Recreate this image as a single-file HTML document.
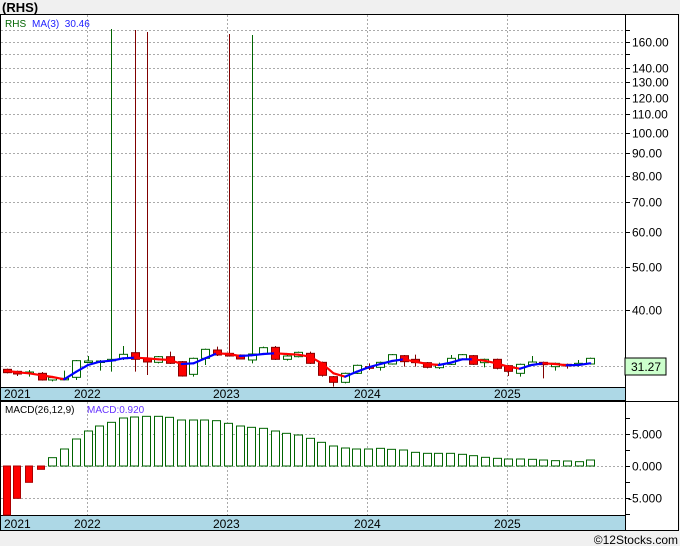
<!DOCTYPE html>
<html><head><meta charset="utf-8"><style>
body{margin:0;width:680px;height:546px;background:#f0f0f0;overflow:hidden;font-family:"Liberation Sans",sans-serif;position:relative}
svg{position:absolute;left:0;top:0}
</style></head><body>
<svg id="s" width="680" height="546" xmlns="http://www.w3.org/2000/svg" font-family="Liberation Sans, sans-serif">
<rect x="0" y="0" width="680" height="14" fill="#f0f0f0"/>
<text x="2" y="12" font-size="13" font-weight="bold" fill="#000">(RHS)</text>
<rect x="0.5" y="14.5" width="678" height="516" fill="#fff" stroke="#000"/>
<g id="grid" stroke="#aaa" stroke-dasharray="2,2" stroke-width="1"></g>
<rect x="1" y="387" width="624" height="13" fill="#add8e6"/>
<line x1="0" y1="387.5" x2="625" y2="387.5" stroke="#000"/>
<line x1="0" y1="400.5" x2="625" y2="400.5" stroke="#000"/>
<line x1="0" y1="401.5" x2="679" y2="401.5" stroke="#000"/>
<rect x="1" y="516" width="624" height="14" fill="#add8e6"/>
<line x1="0" y1="515.5" x2="625" y2="515.5" stroke="#000"/>
<line x1="625.5" y1="14" x2="625.5" y2="531" stroke="#000"/>
<g id="c"></g>
<g font-size="12" fill="#000" id="lab">
<text x="4" y="398">2021</text><text x="74" y="398">2022</text><text x="213" y="398">2023</text><text x="354" y="398">2024</text><text x="494" y="398">2025</text>
<text x="4" y="528">2021</text><text x="74" y="528">2022</text><text x="213" y="528">2023</text><text x="354" y="528">2024</text><text x="494" y="528">2025</text>
</g>
<text x="5" y="27" font-size="10" fill="#006400">RHS</text>
<text x="32" y="27" font-size="10" fill="#2222ff">MA(3)&#160; 30.46</text>
<text x="5" y="413" font-size="10" fill="#000">MACD(26,12,9)</text>
<text x="87" y="413" font-size="10" fill="#6633ff">MACD:0.920</text>
<rect x="625" y="358" width="41" height="17" fill="#ccffcc" stroke="#000"/>
<text x="631" y="371" font-size="12">31.27</text>
<text x="678" y="544" font-size="12" text-anchor="end">©12Stocks.com</text>
</svg>
<script>
var NS="http://www.w3.org/2000/svg",g=document.getElementById('grid'),c=document.getElementById('c'),lab=document.getElementById('lab');
function el(p,t,a,txt){var e=document.createElementNS(NS,t);for(var k in a)e.setAttribute(k,a[k]);if(txt)e.textContent=txt;p.appendChild(e);return e;}
function Y(p){return 42+193.3*Math.log(160/p);}
[87.5,227.5,367.5,507.5].forEach(function(x){el(g,'line',{x1:x,y1:15,x2:x,y2:387});el(g,'line',{x1:x,y1:402,x2:x,y2:515});});
var ticks=[170,160,150,140,130,120,110,100,90,80,70,60,50,40,30];
ticks.forEach(function(p){var y=Math.round(Y(p))+.5;el(g,'line',{x1:1,y1:y,x2:625,y2:y});el(c,'line',{x1:625,y1:y,x2:630,y2:y,stroke:'#000'});
 if(p!=170&&p!=150&&p!=30)el(lab,'text',{x:632,y:y+4},p.toFixed(2));});
[434.5,466.5,498.5].forEach(function(y,i){el(g,'line',{x1:1,y1:y,x2:625,y2:y});el(c,'line',{x1:625,y1:y,x2:630,y2:y,stroke:'#000'});el(lab,'text',{x:i==2?628:632,y:y+4},['5.000','0.000','-5.000'][i]);});
[418,450,482,514].forEach(function(y){el(c,'line',{x1:625,y1:y+.5,x2:630,y2:y+.5,stroke:'#000'});});
var C=[[15,'r',118,128,116,130],[40,'r',124,132,122,138],[67,'g',126,128,120,140],[96,'r',130,150,126,152],[121,'g',143,150,140,154],[148,'g',145,148,122,150],[176,'g',92,142,90,150],[203,'g',93,96,78,98],[230,'g',93,96,90,122],[257,'g',88,92,0,125],[284,'g',73,86,48,90],[311,'r',68,88,0,125],[338,'r',85,96,0,135],[365,'g',80,97,78,100],[392,'r',80,100,65,102],[419,'r',95,138,93,140],[446,'g',85,133,83,140],[473,'g',58,85,56,105],[500,'r',60,75,50,78],[527,'r',70,78,0,80],[553,'r',75,87,73,88],[580,'g',72,90,0,100],[607,'g',53,72,50,74],[634,'r',52,88,48,90],[661,'g',78,88,74,92],[688,'g',67,80,65,82],[715,'r',70,100,65,102],[742,'r',97,136,95,140],[769,'r',140,157,138,170],[796,'g',130,157,128,160],[823,'g',106,130,104,132],[850,'r',110,115,100,120],[877,'g',97,112,95,122],[904,'g',74,102,72,104],[931,'r',77,95,75,110],[958,'r',88,98,74,110],[985,'r',98,112,96,115],[1012,'g',103,113,98,117],[1039,'g',85,103,75,105],[1066,'g',74,87,72,89],[1090,'r',77,103,75,105],[1117,'g',88,98,86,112],[1145,'r',88,115,86,118],[1172,'r',107,124,105,138],[1199,'g',103,130,101,140],[1226,'g',96,104,78,106],[1253,'r',97,104,95,145],[1280,'g',100,110,98,122],[1307,'r',103,108,101,116],[1334,'g',100,105,90,110],[1361,'g',85,102,83,104]];
var sx=1/2.306;
C.forEach(function(d){var x=Math.round(d[0]*sx)+.5,t=d[2]/3+330,b=d[3]/3+330,wt=d[4]==0?[29,30,32,34,35][[257,311,338,527,580].indexOf(d[0])]:d[4]/3+330,wb=d[5]/3+330;
 var col=d[1]=='r'?'#800000':'#006400';if(d[0]==257||d[0]==580)col='#006400';
 el(c,'line',{x1:x,y1:wt,x2:x,y2:wb,stroke:col});
 el(c,'rect',{x:x-4,y:t,width:8,height:Math.max(b-t,1.5),fill:d[1]=='r'?'#f00':'#fff',stroke:d[1]=='r'?'#800':'#006400'});});
var M=[[15,122],[40,127],[67,130],[96,136],[121,141],[148,148],[176,125],[203,105],[230,95],[257,92],[284,85],[311,83],[338,85],[365,88],[392,90],[419,102],[446,100],[473,85],[500,70],[527,72],[553,78],[580,76],[607,72],[634,70],[661,72],[688,74],[715,80],[742,100],[769,130],[796,140],[823,125],[850,112],[877,102],[904,93],[931,88],[958,95],[985,102],[1012,105],[1039,98],[1066,88],[1090,88],[1117,92],[1145,100],[1172,110],[1199,116],[1226,105],[1253,100],[1280,102],[1307,106],[1334,105],[1361,100]];
for(var i=1;i<M.length;i++){var up=M[i][1]<=M[i-1][1];el(c,'line',{x1:M[i-1][0]*sx,y1:M[i-1][1]/3+330,x2:M[i][0]*sx,y2:M[i][1]/3+330,stroke:up?'#0000ff':'#ff0000','stroke-width':2.2,'stroke-linecap':'round'});}
[[15,555],[40,505],[67,457],[94,418]].forEach(function(d){var x=Math.round(d[0]*sx);el(c,'rect',{x:x-3.5,y:466,width:7,height:Math.min(d[1]/3+330,515)-466,fill:'#f00',stroke:'#a00'});});
var G=[383,357,327,303,288,277,264,261,259,259,262,270,270,270,272,280,288,292,295,303,310,315,325,337,348,354,357,357,355,358,360,367,370,370,370,373,377,382,385,387,387,388,390,392,393,395,390];
G.forEach(function(v,i){var zx=121+i*(1361-121)/(G.length-1),x=Math.round(zx*sx)+.5,t=v/3+330;el(c,'rect',{x:x-4,y:t,width:8,height:466-t,fill:'#fff',stroke:'#006400'});});
</script>
</body></html>
